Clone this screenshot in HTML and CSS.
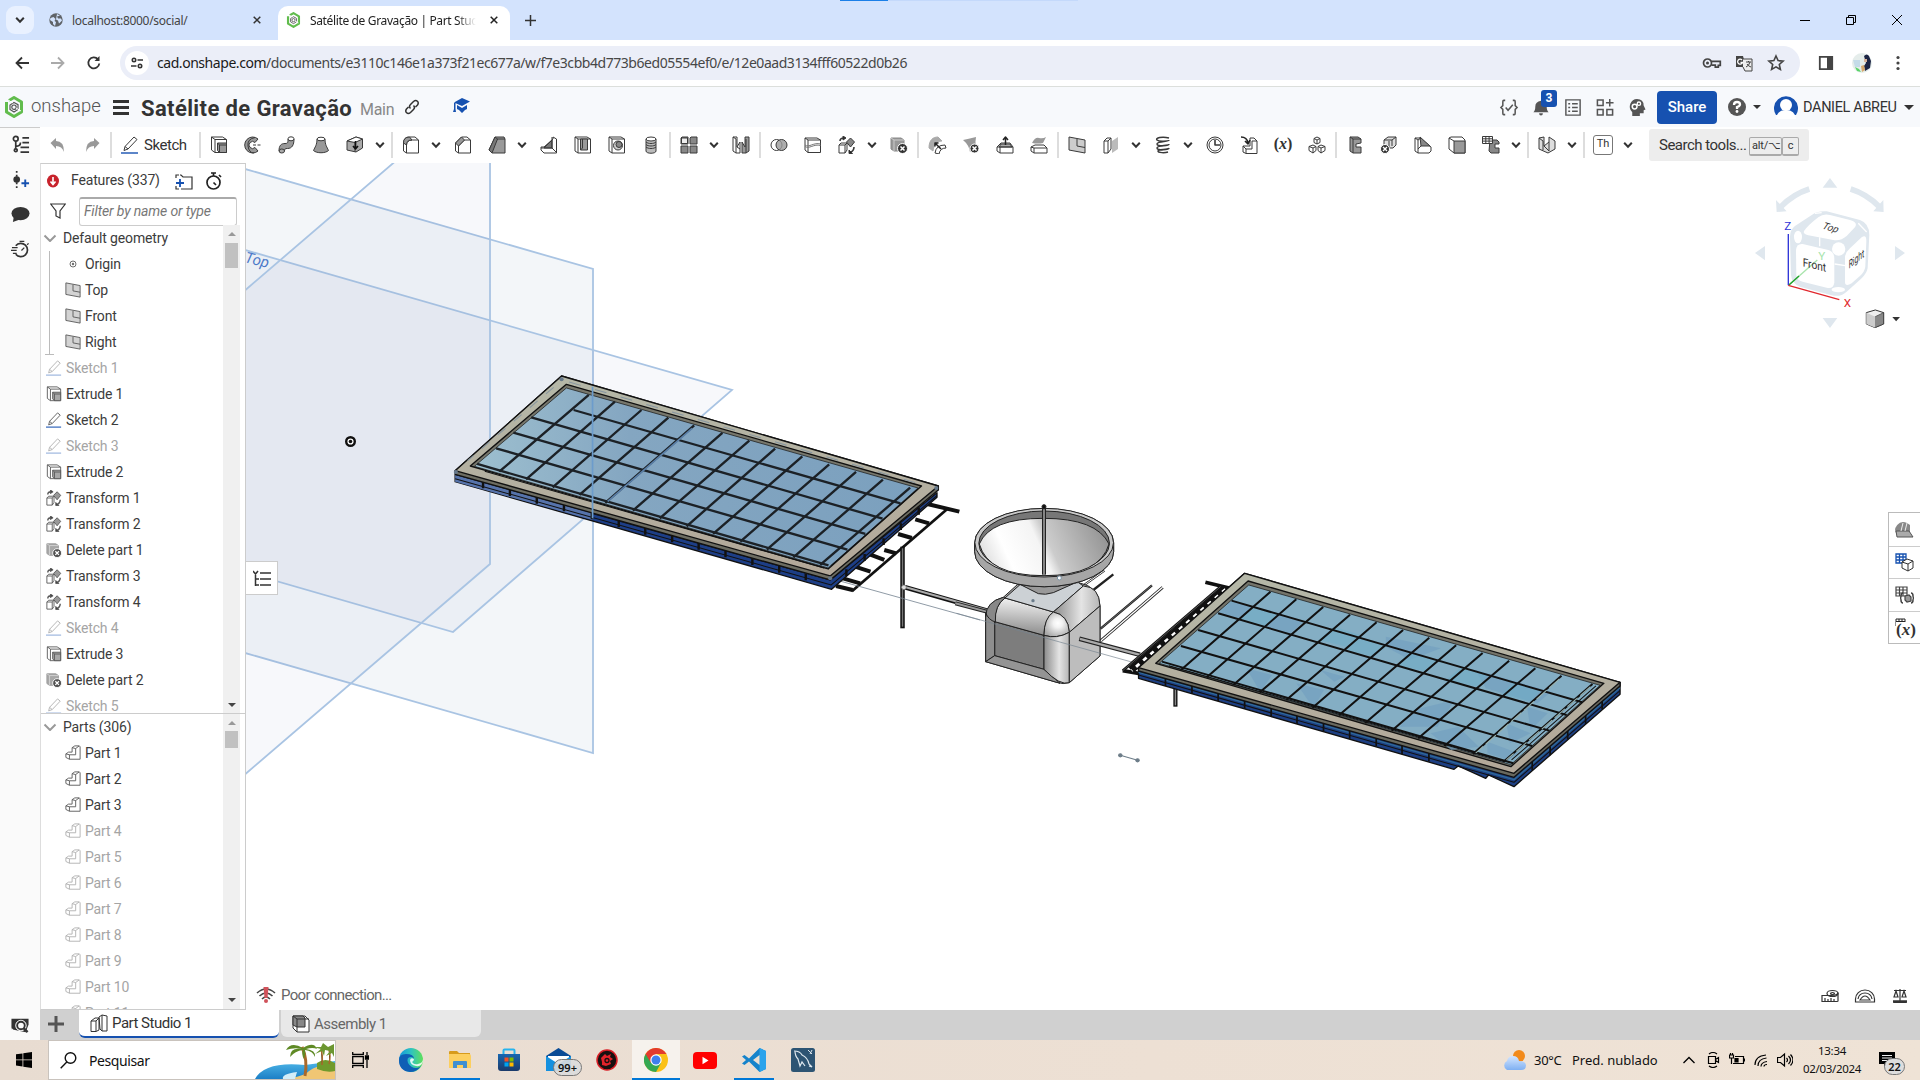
FILE: index.html
```html
<!DOCTYPE html>
<html lang="pt-BR">
<head>
<meta charset="utf-8">
<title>Satélite de Gravação | Part Studio 1</title>
<link rel="stylesheet" href="styles.css">
</head>
<body>
<svg class="defs" width="0" height="0">
<defs>
<linearGradient id="dishIn" x1="0" x2="1" y1=".6" y2=".4"><stop offset="0" stop-color="#ddd"/><stop offset=".2" stop-color="#fff"/><stop offset=".47" stop-color="#f4f4f4"/><stop offset=".55" stop-color="#ccc"/><stop offset="1" stop-color="#949494"/></linearGradient>
<linearGradient id="roundTop" x1=".1" x2="0" y1="0" y2="1"><stop offset="0" stop-color="#f0f0f0"/><stop offset="1" stop-color="#858585"/></linearGradient>
<linearGradient id="roundEdge" x1="0" x2="1"><stop offset="0" stop-color="#8a8a8a"/><stop offset=".6" stop-color="#e4e4e4"/><stop offset="1" stop-color="#b5b5b5"/></linearGradient>
<radialGradient id="corner" cx=".55" cy=".45" r=".6"><stop offset="0" stop-color="#fff"/><stop offset=".3" stop-color="#f2f2f2"/><stop offset="1" stop-color="#a8a8a8"/></radialGradient>
<linearGradient id="frame" x1="0" x2="0" y1="0" y2="1"><stop offset="0" stop-color="#b5b8a8"/><stop offset="1" stop-color="#b3a899"/></linearGradient>
<linearGradient id="glassA" x1="0" x2="1"><stop offset="0" stop-color="#9dbfcf"/><stop offset=".35" stop-color="#84a6c1"/><stop offset="1" stop-color="#7ba0be"/></linearGradient>
<linearGradient id="edgeG" x1="0" x2="1"><stop offset="0" stop-color="#1498dd"/><stop offset=".5" stop-color="#2fc3c0"/><stop offset="1" stop-color="#5fe05a"/></linearGradient>
<linearGradient id="sea" x1="0" x2="0" y1="0" y2="1"><stop offset="0" stop-color="#4fb7e8"/><stop offset="1" stop-color="#1c7fc6"/></linearGradient>
<linearGradient id="cloud" x1="0" x2="0" y1="0" y2="1"><stop offset="0" stop-color="#d4e6ff"/><stop offset="1" stop-color="#7fb0f2"/></linearGradient>
<linearGradient id="store" x1="0" x2="0" y1="0" y2="1"><stop offset="0" stop-color="#1766b0"/><stop offset="1" stop-color="#1b3a6a"/></linearGradient>
<symbol id="chev" viewBox="0 0 10 10"><path d="M1.200 2.800L5 6.800l3.800-4" stroke="#333" stroke-width="2" fill="none"/></symbol>
<symbol id="chev2" viewBox="0 0 14 14"><path d="M1.500 4.500L7 10l5.500-5.500" fill="none" stroke="#888" stroke-width="2"/></symbol>
<symbol id="onlogo" viewBox="0 0 20 22"><path d="M5 4.500l5-3 7.500 4.500v10L10 20.500 2.500 16V6" fill="none" stroke="#61bc4d" stroke-width="3" stroke-linejoin="round"/><path d="M10 6.500l4 2.200v4.800L10 16l-4-2.500V9z" fill="none" stroke="#555" stroke-width="1.200"/><circle cx="10" cy="11.200" r="2.200" fill="none" stroke="#555" stroke-width="1.200"/><path d="M5 4.500L9 7M17 15l-5-3" stroke="#fff" stroke-width="1"/></symbol>
<symbol id="extrude" viewBox="0 0 18 18"><path d="M1.500 1h11l4 2.500v13H5L1.500 14z" fill="#fff"/><path d="M1.500 1L5 3.500h11.500M5 3.500v13"/><path d="M7.500 7h9v9.500h-7l-2-2z" fill="#999"/><path d="M7.500 7l2 2h7M9.500 9v7.500"/></symbol>
<symbol id="revolve" viewBox="0 0 18 18"><path d="M14 3A8 8 0 1 0 14 15l-3-3.500a3.500 3.500 0 1 1 0-5z" fill="#999"/><path d="M11 1.500Q3 3 4 10t6 7"/><path d="M9 9h8" stroke-dasharray="3 1.500"/></symbol>
<symbol id="sweep" viewBox="0 0 18 18"><path d="M1 15c0-5.500 2-7.500 6-7.500 3 0 3-1 3-4.500h6c0 6-2 9.500-6.500 9.500-2.500 0-3 .500-3 2.500z" fill="#999"/><ellipse cx="13" cy="2.800" rx="3" ry="2" fill="#fff"/><ellipse cx="3.800" cy="15" rx="2.700" ry="2" fill="#aaa"/></symbol>
<symbol id="loft" viewBox="0 0 18 18"><path d="M5 3C5 9 3 11 1.500 14.500c3 3 12 3 15 0C15 11 13 9 13 3z" fill="#999"/><ellipse cx="9" cy="3" rx="4" ry="1.800" fill="#fff"/></symbol>
<symbol id="thicken" viewBox="0 0 18 18"><path d="M1 5l9-4 6.500 2v9L10 16l-9-2z" fill="#aaa"/><path d="M1 5l9-4 6.500 2L9 6.500z" fill="#fff"/><path d="M9 6.500V16"/><path d="M9.500 5v7M7 10l2.500 3 2.500-3" stroke="#111" stroke-width="1.600"/></symbol>
<symbol id="fillet" viewBox="0 0 18 18"><path d="M1.500 15V7q0-6 6-6H13l3.500 3v13h-12z" fill="#fff"/><path d="M4.500 17V9q0-5 6-5h6"/><path d="M1.500 7q0-6 6-6L10 4q-5.500 0-5.500 5z" fill="#999"/></symbol>
<symbol id="chamfer" viewBox="0 0 18 18"><path d="M1.500 15V7l6-6H13l3.500 3v13h-12z" fill="#fff"/><path d="M4.500 17v-7l6-6h6"/><path d="M1.500 7l6-6 3 3-6 6z" fill="#999"/></symbol>
<symbol id="draft" viewBox="0 0 18 18"><path d="M1 14L7 1h9l1 2v14H4z" fill="#999"/><path d="M1 14L7 1l2.500 2L4 17z" fill="#777"/><path d="M9 3h8"/></symbol>
<symbol id="rib" viewBox="0 0 18 18"><path d="M13 1l3.500 2v14H4l-3-3v-3h3L13 3z" fill="#fff"/><path d="M4 12L12 4v8z" fill="#777"/><path d="M12 1v11H1M12 12l4.500 4.500"/></symbol>
<symbol id="shell" viewBox="0 0 18 18"><path d="M1 1h12l3.500 2v14H4L1 15z" fill="#fff"/><path d="M4 17V3h12.500M1 1l3 2"/><path d="M6.500 3h7v11h-7z" fill="#999"/><path d="M6.500 14l2-2V3"/></symbol>
<symbol id="hole" viewBox="0 0 18 18"><path d="M1 1h12l3.500 2v14H4L1 15z" fill="#fff"/><path d="M4 17V3h12.500M1 1l3 2"/><circle cx="10" cy="9.500" r="4.500" fill="#ccc"/><circle cx="11" cy="8.500" r="3" fill="#888"/></symbol>
<symbol id="thread" viewBox="0 0 18 18"><path d="M4 3v12c0 3 10 3 10 0V3" fill="#bbb"/><ellipse cx="9" cy="3" rx="5" ry="2" fill="#fff"/><path d="M4 6c2 2 8 2 10 0M4 8.500c2 2 8 2 10 0M4 11c2 2 8 2 10 0"/></symbol>
<symbol id="pattern" viewBox="0 0 18 18"><path d="M1 2l1-1h6v7H1zM10 2l1-1h6v7h-7zM1 10h7v7H1zM10 10h7v7h-7z" fill="#888"/><path d="M1.500 2h6v5.500h-6z" fill="#eee"/></symbol>
<symbol id="mirror" viewBox="0 0 18 18"><path d="M1 1h4v10l3-5v11H4l-3-2z" fill="#fff"/><path d="M1 1l3 2v14M5 11l3 2"/><path d="M17 1h-4v10l-3-5v11h4l3-2z" fill="#999"/><path d="M14 3v14"/></symbol>
<symbol id="boolean" viewBox="0 0 18 18"><circle cx="6.500" cy="9" r="5.500"/><circle cx="11.500" cy="9" r="5.500" fill="#999" fill-opacity=".8"/></symbol>
<symbol id="split" viewBox="0 0 18 18"><path d="M1 2h12l3.500 2v12.500H4L1 14z" fill="#fff"/><path d="M1 2l3 2h12.500M4 4v12.500"/><path d="M1 9c4 3 9-3 15.500-1M1 10.500c4 3 9-3 15.500-1" stroke="#777"/></symbol>
<symbol id="transform" viewBox="0 0 18 18"><path d="M1 9l2-2h6v7l-2 3H1z" fill="#fff"/><path d="M1 9h6v8M7 9l2-2"/><path d="M12.500 2l4 4-4 5-4-5z" fill="#888"/><path d="M2 5q0-3 4-3M16 11q0 4-4 5.500" stroke-width="1.600"/><path d="M5 0l3 2-3 2zM11 14v3.500h3.500z" fill="#222"/></symbol>
<symbol id="delpart" viewBox="0 0 18 18"><path d="M1 2h10l3 2v11H4l-3-2z" fill="#999" stroke="#888"/><path d="M1 2l3 2v11M4 4h10" stroke="#ccc"/><circle cx="12.500" cy="12.500" r="5" fill="#333" stroke="#fff"/><path d="M10.500 10.500l4 4m0-4l-4 4" stroke="#fff" stroke-width="1.500"/></symbol>
<symbol id="modfillet" viewBox="0 0 18 18"><path d="M1 12C1 4 5 1 10 1l4 4C8 5 6 9 5 15z" fill="#aaa" stroke="#aaa"/><path d="M7 17q1-8 10-8l1 3q-6 0-7 6z" fill="#fff"/><path d="M13 13L7 7m0 3.500V7h3.500" stroke="#222" stroke-width="1.500"/></symbol>
<symbol id="delface" viewBox="0 0 18 18"><path d="M1 4q5-1 13-3-1 5 0 8l-6 7Q7 9 1 4z" fill="#999" stroke="none"/><circle cx="12.500" cy="12.500" r="4.500" fill="#333" stroke="#fff"/><path d="M10.500 10.500l4 4m0-4l-4 4" stroke="#fff" stroke-width="1.500"/></symbol>
<symbol id="moveface" viewBox="0 0 18 18"><path d="M1 11l4-4h9l3 4v6H4l-3-2z" fill="#fff"/><path d="M5 8h9l2 3H3z" fill="#aaa"/><path d="M1 11h3v6m0-6h13"/><path d="M9.500 9V1M7 4l2.500-3L12 4" stroke="#222" stroke-width="1.500"/></symbol>
<symbol id="replace" viewBox="0 0 18 18"><path d="M1 11l4-2h9l3 3v5H4l-3-2z" fill="#fff"/><path d="M1 11l3 1h13M4 12v5"/><path d="M2 7q3-6 7-5t7-1l-3 6q-5 1-11 0z" fill="#999" stroke="none"/></symbol>
<symbol id="plane" viewBox="0 0 18 18"><path d="M1 1l16 3v13L1 14z" fill="#ccc"/><path d="M9 3v7l8 1.500"/></symbol>
<symbol id="offset" viewBox="0 0 18 18"><path d="M10 5l6-4v12l-6 4z" fill="#bbb" stroke="none"/><path d="M2 5l3-3h4v11l-3 4H2z" fill="#fff"/><path d="M6 5v12M6 5l3-3M2 5h4"/></symbol>
<symbol id="helix" viewBox="0 0 18 18"><path d="M15 2C8 0 1 2 3 4s12 1 12 0M15 4c0 2-12 1-12 4s12 2 12 0M15 8c0 2-12 1-12 4s12 2 12 0M15 12c-1 2-11 1-11 3s7 2 10 1" stroke-width="1.500"/></symbol>
<symbol id="measure" viewBox="0 0 18 18"><circle cx="9" cy="9" r="8"/><circle cx="9" cy="9" r="6"/><path d="M9 4v5h5" stroke-width="1.600"/></symbol>
<symbol id="derive" viewBox="0 0 18 18"><path d="M3 10v6l3 1.500h11V5l-3-3h-4v8z" fill="#fff"/><path d="M3 10l3 3v4M6 13h6V5h5"/><path d="M1 1q6 0 7 6M5 5l3 3 2-4" stroke="#222" stroke-width="1.600"/></symbol>
<symbol id="cubes" viewBox="0 0 18 18"><path d="M9 1l3 1.500v4L9 8 6 6.500v-4zM6 2.500L9 4l3-1.500M9 4v4M5 9l3 1.500v4L5 17l-4-2.500v-4zM1 10.500l4 1.500 3-1.500M5 12v5M13 9l4 1.500v4L13 17l-3-2.500v-4zM10 10.500l3 1.500 4-1.500M13 12v5"/></symbol>
<symbol id="sheet" viewBox="0 0 18 18"><path d="M4 1h8l3 2v4l-5 1v3h5v6H7l-3-2z" fill="#999"/><path d="M4 1l3 2v14M7 3h8"/></symbol>
<symbol id="delbend" viewBox="0 0 18 18"><path d="M4 4l4-3h8v8l-3 3H9l-5-3z" fill="#ddd"/><path d="M4 4h8v6M12 4l4-3M9 5v7"/><circle cx="5" cy="13" r="4.500" fill="#333" stroke="#fff"/><path d="M3 11l4 4m0-4l-4 4" stroke="#fff" stroke-width="1.400"/></symbol>
<symbol id="flange" viewBox="0 0 18 18"><path d="M1 2h5l11 9v4l-2 2H4l-3-2z" fill="#fff"/><path d="M6 1l10 9H7z" fill="#888"/><path d="M4 17V4L1 2M4 4l3-2M7 10l-3 3"/></symbol>
<symbol id="finish" viewBox="0 0 18 18"><path d="M1 2l2-1h11l3 3v13H6l-5-4z" fill="#fff"/><path d="M6 5h11v12H6z" fill="#999"/><path d="M1 2l5 3"/></symbol>
<symbol id="table" viewBox="0 0 18 18"><path d="M8 4h7l2 2v2h-4v4h4v5H9l-2-2z" fill="#888"/><path d="M.5.500h10v7H.5z" fill="#fff"/><path d="M.5 2.800h10M.5 5.100h10M3.800.5v7M7.100.5v7"/></symbol>
<symbol id="surf" viewBox="0 0 18 18"><path d="M1 2l5-1v9l5-4V1l6 4v8l-7 4-9-4z" fill="#ddd"/><path d="M6 10l5 5V6M1 2l4 3v9"/></symbol>
<symbol id="sketch" viewBox="0 0 18 18"><path d="M3 14.500l1-4L13 1l3 2.500-9 9.500zM4 10.500l3 2.500"/><path d="M0 17h17" stroke="#1651b0" stroke-width="1.400"/></symbol>
<symbol id="part" viewBox="0 0 18 18"><path d="M1 10l3-2h4V3l3-2h5l1 1v14H5l-4-2z" fill="#fff"/><path d="M1 10l4 1h7V4L8 3M12 4l4-3M5 11v5"/></symbol>
</defs>
</svg>

<header class="tabstrip">
  <div class="tabsearch"><svg width="10" height="10"><use href="#chev"/></svg></div>
  <div class="btab"><svg width="14" height="14" viewBox="0 0 14 14"><circle cx="7" cy="7" r="6.700" fill="#5f6368"/><path d="M1.500 5l3-1 2 2-1 2 1.500 1-1 4-2-2V9l-3-2zM8 1l3 1.500-3 1 1 2h3l1 2-3 3-1-3-2-1z" fill="#d3e3fd"/></svg><span class="bt u1">localhost:8000/social/</span><svg class="x" width="8" height="8" viewBox="0 0 8 8"><path d="M.7.700l6.600 6.600m0-6.600L.7 7.300" stroke="#333" stroke-width="1.500"/></svg></div>
  <div class="btab on"><svg width="15" height="16"><use href="#onlogo"/></svg><span class="bt u2">Satélite de Gravação | Part Studio 1</span><svg class="x" width="8" height="8" viewBox="0 0 8 8"><path d="M.7.700l6.600 6.600m0-6.600L.7 7.300" stroke="#222" stroke-width="1.500"/></svg></div>
  <svg class="newtab" width="11" height="11" viewBox="0 0 11 11"><path d="M5.500 0v11M0 5.500h11" stroke="#333" stroke-width="1.500"/></svg>
  <div class="loadbar"><i></i></div>
  <div class="wc"><svg viewBox="0 0 10 10"><path d="M0 5.500h10" stroke="#000"/></svg><svg viewBox="0 0 10 10"><path d="M.5 2.500h7v7h-7zM2.500 2.500v-2h7v7h-2" fill="none" stroke="#000"/></svg><svg viewBox="0 0 10 10"><path d="M0 0l10 10M10 0L0 10" stroke="#000"/></svg></div>
</header>

<nav class="addr">
  <svg class="nb" viewBox="0 0 16 16"><path d="M15 8H3M8 2.500L2.500 8 8 13.500" stroke="#333" stroke-width="1.800" fill="none"/></svg>
  <svg class="nb" viewBox="0 0 16 16"><path d="M1 8h12M8 2.500L13.500 8 8 13.500" stroke="#aaa" stroke-width="1.800" fill="none"/></svg>
  <svg class="nb" viewBox="0 0 16 16"><path d="M13.300 8.500A5.500 5.500 0 1 1 12 4.300" stroke="#333" stroke-width="1.800" fill="none"/><path d="M13.500 1v5H8.500z" fill="#333"/></svg>
  <div class="omni"><b class="site"><svg width="12" height="12" viewBox="0 0 12 12" fill="none" stroke="#333" stroke-width="1.600"><circle cx="3" cy="3" r="1.700"/><path d="M6.500 3H12M0 9h5.500"/><circle cx="9" cy="9" r="1.700"/></svg></b><span class="url"><em>cad.onshape.com</em>/documents/e3110c146e1a373f21ec677a/w/f7e3cbb4d773b6ed05554ef0/e/12e0aad3134fff60522d0b26</span>
    <svg class="oi" viewBox="0 0 18 18"><g fill="none" stroke="#444" stroke-width="1.700"><circle cx="4.500" cy="9" r="4"/><path d="M8.300 7.300h9v4h-2v1.800h-3v-2H8.300"/></g><circle cx="4.500" cy="9" r="1.500" fill="#444"/></svg>
    <svg class="oi" viewBox="0 0 18 18"><path d="M1 2h7l3 11H1z" fill="#444"/><path d="M8 5h9v12H10l-2-4" fill="#eee" stroke="#444"/><path d="M7 6a2.500 2.500 0 1 0 .5 2.500H5.500" stroke="#fff" fill="none" stroke-width="1.300"/><path d="M11 8h5M13.500 7v1M15 8q-1 4-4 5M12 10q1 2 4 3" stroke="#444" fill="none"/></svg>
    <svg class="oi" viewBox="0 0 18 18"><path d="M9 2l2.100 4.600 5 .5-3.800 3.400 1.100 5L9 12.900l-4.400 2.600 1.100-5L1.900 7.100l5-.5z" fill="none" stroke="#444" stroke-width="1.600"/></svg>
  </div>
  <svg class="nb r1" viewBox="0 0 16 16"><path d="M1.800 1.800h12.400v12.400H1.800z" fill="none" stroke="#444" stroke-width="1.800"/><path d="M9 2h5v12H9z" fill="#444"/></svg>
  <svg class="nb av" viewBox="0 0 20 20"><circle cx="10" cy="10" r="10" fill="#e5edeb"/><path d="M12 3q3-3 5 0l2 5-1 7-5 3-1-5 2-3z" fill="#1c2444"/><path d="M12 6h3v3h-3z" fill="#d9b39a"/><path d="M3 14l4 2 2 3-4-1z" fill="#59d468"/><path d="M1 7h7v7H3z" fill="#c4dbe8"/><path d="M9 13l3-1 1 5-3 2z" fill="#d7a86c"/></svg>
  <svg class="nb" viewBox="0 0 16 16"><g fill="#444"><circle cx="8" cy="2.500" r="1.600"/><circle cx="8" cy="8" r="1.600"/><circle cx="8" cy="13.500" r="1.600"/></g></svg>
</nav>

<header class="app">
  <svg class="logo" width="20" height="22"><use href="#onlogo"/></svg>
  <span class="brand">onshape</span>
  <span class="burger"><i></i><i></i><i></i></span>
  <h1>Satélite de Gravação</h1><span class="main">Main</span>
  <svg class="link" width="16" height="16" viewBox="0 0 16 16" fill="none" stroke="#333" stroke-width="1.500"><path d="M6.500 9.500c-1.500-1.500-1-3 0-4l3-3c3-2.500 6 .5 4 3.500l-2 2M9.500 6.500c1.500 1.500 1 3 0 4l-3 3c-3 2.500-6-.5-4-3.500l2-2"/></svg>
  <svg class="cap" width="17" height="16" viewBox="0 0 17 16"><path d="M9 0l8 3.500L9 8 1 4.500zM4 7l5 3 5-3v4l-2 1-3 3-3-3-2-1zM1 5h1.500v6L3 14H0l1-3z" fill="#1651b0"/></svg>
  <div class="hr">
    <svg class="hi" viewBox="0 0 20 20" fill="none" stroke="#555" stroke-width="1.600"><path d="M6 2.500H4.500Q3.500 2.500 3.500 4v4L1.500 10l2 2v4q0 1.500 1 1.500H6M14 2.500h1.500q1 0 1 1.500v4l2 2-2 2v4q0 1.500-1 1.500H14M6.500 10l2.500 3 5-6"/></svg>
    <span class="bell"><svg class="hi" viewBox="0 0 20 20"><path d="M2 15q2-1.500 2-6 0-5 6-6 6 1 6 6 0 4.500 2 6zM8 16h4q0 2.500-2 2.500T8 16z" fill="#555"/></svg><b>3</b></span>
    <svg class="hi" viewBox="0 0 20 20" fill="none" stroke="#555" stroke-width="1.500"><path d="M2.500 2h15v16h-15zM5 6h2m2 0h6M5 10h2m2 0h6M5 14h2m2 0h6"/></svg>
    <svg class="hi" viewBox="0 0 20 20" fill="none" stroke="#555" stroke-width="1.600"><path d="M2 2h6v6H2zM2 12h6v6H2zM12 12h6v6h-6zM15 1v8M11 5h8"/></svg>
    <svg class="hi" viewBox="0 0 20 20"><path d="M5 19v-4Q1 11 3 6q2-5 7-5 7 0 7 7l2 4-2 1v3h-4v3z" fill="#555"/><circle cx="7.500" cy="9" r="2.500" fill="none" stroke="#fff" stroke-width="1.600"/><circle cx="12" cy="6" r="1.800" fill="none" stroke="#fff" stroke-width="1.400"/></svg>
    <button>Share</button>
    <svg class="help" width="18" height="18" viewBox="0 0 18 18"><circle cx="9" cy="9" r="9" fill="#555"/><path d="M6 7q0-3 3-3t3 2.500Q12 8 9 9v2" stroke="#fff" stroke-width="2.300" fill="none"/><circle cx="9" cy="13.500" r="1.400" fill="#fff"/></svg>
    <i class="caret c1"></i>
    <svg class="user" width="24" height="24" viewBox="0 0 24 24"><path d="M2 20A12 12 0 1 1 22 20z" fill="#1651b0"/><circle cx="12" cy="10" r="6" fill="#fff"/><path d="M2 24q1-9 10-9t10 9z" fill="#fff"/></svg>
    <span class="name">DANIEL ABREU</span><i class="caret"></i>
  </div>
</header>

<main>
  <aside class="rail">
    <svg viewBox="0 0 20 20" fill="none" stroke="#333" stroke-width="1.800"><circle cx="5" cy="4" r="2.500"/><circle cx="5" cy="16" r="1.500"/><path d="M5 6.500v8M5 12q5 0 5-4M12 3h7M12 8h7M10 13h9M10 18h9"/></svg>
    <svg viewBox="0 0 20 20"><path d="M6 1v18" stroke="#333" stroke-width="1.800" stroke-dasharray="2 2"/><circle cx="6" cy="10" r="3.500" fill="#333"/><path d="M11 14h8M15 10v8" stroke="#1651b0" stroke-width="2"/></svg>
    <svg viewBox="0 0 20 20"><ellipse cx="10" cy="9" rx="9.500" ry="7" fill="#333"/><path d="M3 12l-1 6 8-3z" fill="#333"/></svg>
    <svg viewBox="0 0 20 20" fill="none" stroke="#333" stroke-width="1.800"><path d="M5 6a7 7 0 1 1 0 9"/><path d="M9 1.500h5M17 5l1.500-1.500M11 11l3-3M1 8h6M0 11h6M2 14h4" stroke-width="1.300"/></svg>
    <svg class="last" viewBox="0 0 20 20"><path d="M1 3h18v6l-3 8-15-3z" fill="#333"/><circle cx="11" cy="10" r="5.500" fill="#fafafa" stroke="#fafafa"/><circle cx="11" cy="10" r="4" fill="none" stroke="#333" stroke-width="2"/><path d="M14 13l4 4" stroke="#333" stroke-width="2.500"/><path d="M1 12l4 6H1z" fill="#fafafa"/></svg>
  </aside>
  <div class="studio">
    <div class="tools">
      <svg class="un" viewBox="0 0 14 14"><path d="M0 5l5.500-5v3q8 0 8 11-2-6-8-6v3z" fill="#999"/></svg>
      <svg class="un" viewBox="0 0 14 14"><path d="M14 5L8.500 0v3q-8 0-8 11 2-6 8-6v3z" fill="#999"/></svg>
      <i class="sep"></i><span class="sk"><svg width="18" height="18"><use href="#sketch"/></svg>Sketch</span><i class="sep"></i>
      <svg class="t"><use href="#extrude"/></svg><svg class="t"><use href="#revolve"/></svg><svg class="t"><use href="#sweep"/></svg><svg class="t"><use href="#loft"/></svg><svg class="t"><use href="#thicken"/></svg><svg class="c"><use href="#chev"/></svg><i class="sep"></i>
      <svg class="t"><use href="#fillet"/></svg><svg class="c"><use href="#chev"/></svg><svg class="t"><use href="#chamfer"/></svg><svg class="t"><use href="#draft"/></svg><svg class="c"><use href="#chev"/></svg><svg class="t"><use href="#rib"/></svg><svg class="t"><use href="#shell"/></svg><svg class="t"><use href="#hole"/></svg><svg class="t"><use href="#thread"/></svg><i class="sep"></i>
      <svg class="t"><use href="#pattern"/></svg><svg class="c"><use href="#chev"/></svg><svg class="t"><use href="#mirror"/></svg><i class="sep"></i>
      <svg class="t"><use href="#boolean"/></svg><svg class="t"><use href="#split"/></svg><svg class="t"><use href="#transform"/></svg><svg class="c"><use href="#chev"/></svg><svg class="t"><use href="#delpart"/></svg><i class="sep"></i>
      <svg class="t"><use href="#modfillet"/></svg><svg class="t"><use href="#delface"/></svg><svg class="t"><use href="#moveface"/></svg><svg class="t"><use href="#replace"/></svg><i class="sep"></i>
      <svg class="t"><use href="#plane"/></svg><svg class="t"><use href="#offset"/></svg><svg class="c"><use href="#chev"/></svg><svg class="t"><use href="#helix"/></svg><svg class="c"><use href="#chev"/></svg><svg class="t"><use href="#measure"/></svg><svg class="t"><use href="#derive"/></svg><span class="t vx">(<i>x</i>)</span><svg class="t"><use href="#cubes"/></svg><i class="sep"></i>
      <svg class="t"><use href="#sheet"/></svg><svg class="t"><use href="#delbend"/></svg><svg class="t"><use href="#flange"/></svg><svg class="t"><use href="#finish"/></svg><svg class="t"><use href="#table"/></svg><svg class="c"><use href="#chev"/></svg><i class="sep"></i>
      <svg class="t"><use href="#surf"/></svg><svg class="c"><use href="#chev"/></svg><i class="sep"></i>
      <span class="th">Th</span><svg class="c"><use href="#chev"/></svg>
      <div class="stools"><span>Search tools...</span><kbd>alt/⌥</kbd><kbd>c</kbd></div>
    </div>

    <div class="work">
      <section class="features">
        <div class="fh"><svg width="12" height="14" viewBox="0 0 12 14"><ellipse cx="6" cy="7" rx="6" ry="6.500" fill="#c8232c"/><path d="M6 3v7M3.500 7.500L6 10.500l2.500-3" stroke="#fff" stroke-width="1.600" fill="none"/></svg><span>Features (337)</span>
          <svg class="fo" width="18" height="16" viewBox="0 0 18 16" fill="none"><path d="M4 1H1v3M1 12v3h3M6 15h11V3H8L6 1H5" stroke="#333" stroke-width="1.200"/><path d="M1 9h8M5 5v8" stroke="#1651b0" stroke-width="1.800"/></svg>
          <svg width="17" height="18" viewBox="0 0 17 18" fill="none" stroke="#222" stroke-width="1.700"><circle cx="8.500" cy="10.500" r="6.500"/><path d="M6 1h5M8.500 1v3M8.500 10.500l2.500 2.500M14 3l2 2"/></svg></div>
        <div class="ff"><svg width="16" height="16" viewBox="0 0 16 16"><path d="M.7 1h14.600L10 8v7l-4-2V8z" fill="none" stroke="#333" stroke-width="1.200"/></svg><div class="inp">Filter by name or type</div></div>
        <div class="list l1">
          <div class="rows">
            <div class="row g"><svg><use href="#chev2"/></svg>Default geometry</div>
            <div class="geo">
            <div class="row k"><svg viewBox="0 0 16 16"><circle cx="8" cy="8" r="3" fill="none" stroke="#555"/><circle cx="8" cy="8" r="1.200" fill="#555" stroke="none"/></svg>Origin</div>
            <div class="row k"><svg><use href="#plane"/></svg>Top</div>
            <div class="row k"><svg><use href="#plane"/></svg>Front</div>
            <div class="row k"><svg><use href="#plane"/></svg>Right</div>
            </div>
            <div class="row off"><svg><use href="#sketch"/></svg>Sketch 1</div>
            <div class="row"><svg><use href="#extrude"/></svg>Extrude 1</div>
            <div class="row"><svg><use href="#sketch"/></svg>Sketch 2</div>
            <div class="row off"><svg><use href="#sketch"/></svg>Sketch 3</div>
            <div class="row"><svg><use href="#extrude"/></svg>Extrude 2</div>
            <div class="row"><svg><use href="#transform"/></svg>Transform 1</div>
            <div class="row"><svg><use href="#transform"/></svg>Transform 2</div>
            <div class="row"><svg><use href="#delpart"/></svg>Delete part 1</div>
            <div class="row"><svg><use href="#transform"/></svg>Transform 3</div>
            <div class="row"><svg><use href="#transform"/></svg>Transform 4</div>
            <div class="row off"><svg><use href="#sketch"/></svg>Sketch 4</div>
            <div class="row"><svg><use href="#extrude"/></svg>Extrude 3</div>
            <div class="row"><svg><use href="#delpart"/></svg>Delete part 2</div>
            <div class="row off"><svg><use href="#sketch"/></svg>Sketch 5</div>
          </div>
          <div class="sb"><i class="up"></i><i class="thumb"></i><i class="dn"></i></div>
        </div>
        <div class="list l2">
          <div class="rows">
            <div class="row g"><svg><use href="#chev2"/></svg>Parts (306)</div>
            <div class="row k"><svg><use href="#part"/></svg>Part 1</div>
            <div class="row k"><svg><use href="#part"/></svg>Part 2</div>
            <div class="row k"><svg><use href="#part"/></svg>Part 3</div>
            <div class="row k off"><svg><use href="#part"/></svg>Part 4</div>
            <div class="row k off"><svg><use href="#part"/></svg>Part 5</div>
            <div class="row k off"><svg><use href="#part"/></svg>Part 6</div>
            <div class="row k off"><svg><use href="#part"/></svg>Part 7</div>
            <div class="row k off"><svg><use href="#part"/></svg>Part 8</div>
            <div class="row k off"><svg><use href="#part"/></svg>Part 9</div>
            <div class="row k off"><svg><use href="#part"/></svg>Part 10</div>
            <div class="row k off"><svg><use href="#part"/></svg>Part 11</div>
          </div>
          <div class="sb"><i class="up"></i><i class="thumb"></i><i class="dn"></i></div>
        </div>
      </section>

      <section class="canvas">
        <svg class="scene" width="1674" height="847" viewBox="246 163 1674 847">
          <!-- reference planes -->
          <g fill="#5a7fac" fill-opacity=".07" stroke="#a9c4e3" stroke-width="1.800">
            <path d="M200 156L593 269V753L200 640z"/>
            <path d="M200 237L732 390 453 632 200 559z" fill-opacity=".05"/>
            <path d="M200 329L490 80V564L200 813z" fill-opacity=".05"/>
          </g>
          <text x="244" y="262" transform="rotate(14 244 262)" class="pl">Top</text>
          <circle cx="350.500" cy="441.500" r="4.300" fill="#fff" stroke="#111" stroke-width="2.400"/><circle cx="350.500" cy="441.500" r="1.800" fill="#111"/>

          <!-- left solar wing -->
          <g transform="translate(440 360) scale(.3444 .3333)" stroke="#111" stroke-width="4" stroke-linejoin="round">
            <path d="M1415 432L1508 455M1380 478l40 12M1330 522l40 12M1290 570l35 10M1240 580l50 20M1205 620l45 15M1170 655l50 15M1150 678l48 12" stroke-width="12"/>
            <path d="M1472 448L1196 694" stroke-width="8"/>
            <path d="M1343 560V805" stroke-width="13"/><path d="M1343 565V800" stroke="#777" stroke-width="4"/>
            <path d="M1133 655L1568 780" stroke="#7b8896" stroke-width="2.500"/>
            <path d="M1350 682L1630 764" stroke-width="14"/><path d="M1350 681L1630 763" stroke="#aaa" stroke-width="6"/><circle cx="1347" cy="682" r="7" fill="#ddd" stroke="#666" stroke-width="2"/>
            <path d="M44 345L1133 660 1443 398V412L1137 688 44 365z" fill="#1d3e86"/>
            <path d="M44 345L443 460V480L44 365z" fill="#5673ab" stroke="none"/>
            <path d="M44 356L1136 675 1443 407" stroke-width="3" fill="none"/>
            <path d="M125 365v20M203 388v20M281 411v20M360 434v20M441 458v20M519 481v20M596 504v20M674 527v20M751 549v20M829 572v20M907 595v20M985 618v20M1062 641v20M1180 628v20M1233 582v20M1288 535v20M1338 490v20M1390 444v20" stroke-width="7"/>
            <path d="M44 332L353 48 1447 378V390L1133 660 44 343z" fill="#6d6d62"/>
            <path d="M44 332L353 48 1447 378 1133 648z" fill="url(#frame)"/>
            <path d="M88 318L367 73 1398 378 1127 627z" fill="#77776c"/>
            <path d="M100 319L367 84 1388 384 1127 624z" fill="url(#glassA)" stroke-width="2"/>
            <path d="M432 105L172 335M508 125L250 358M585 150L327 382M663 173L405 405M738 196L480 429M820 219L560 452M898 242L638 475M973 266L716 499M1052 289L793 522M1130 313L872 545M1208 336L949 569M1286 359L1026 592M1365 383L1104 615" stroke="#1c2126" stroke-width="7"/>
            <path d="M388 150L1337 430M265 172L1285 476M213 218L1235 522M163 265L1183 569M108 312L1128 616" stroke="#1c2126" stroke-width="7"/>
            <path d="M130 334L1115 624M1385 390L1135 618" stroke-width="3"/>
            <path d="M732 205L487 424" stroke="#5b80a8" stroke-width="5"/>
            <path d="M375 66L1400 374" stroke="#8796a0" stroke-width="3" stroke-dasharray="35 43"/>
            <path d="M330 82L80 302" stroke="#8796a0" stroke-width="3" stroke-dasharray="30 32"/>
            <path d="M443 80V475" stroke="#6c9ccc" stroke-width="5"/>
            <circle cx="353" cy="58" r="6" fill="#66788a" stroke="none"/><circle cx="1441" cy="384" r="6" fill="#66788a" stroke="none"/><circle cx="1133" cy="655" r="6" fill="#66788a" stroke="none"/><circle cx="46" cy="336" r="6" fill="#66788a" stroke="none"/>
          </g>

          <!-- dish and body -->
          <g transform="translate(960 480) scale(.3333)" stroke="#222" stroke-width="3" stroke-linejoin="round">
            <path d="M370 317L433 272" stroke-width="7"/><path d="M370 317L433 272" stroke="#fff" stroke-width="3"/><path d="M400 330L460 283M422 446L576 316" stroke-width="7"/><path d="M422 446L576 316" stroke="#888" stroke-width="2"/><path d="M422 483L608 322" stroke-width="9"/><path d="M422 483L608 322" stroke="#fff" stroke-width="4"/>
            <path d="M-14 370L80 395" stroke-width="12"/><path d="M-14 370L80 395" stroke="#999" stroke-width="6"/>
            <path d="M77 415Q78 365 130 352L172 314 356 308Q418 320 420 378V528L328 608Q310 614 290 607L77 545z" fill="#a9a9a9"/>
            <path d="M104 425L252 466V568L104 527z" fill="#7d7d7d"/><path d="M77 400L104 424V527L77 545z" fill="#8e8e8e"/><path d="M77 545L104 527 252 568 300 610z" fill="#949494"/>
            <path d="M135 354L280 396Q252 420 252 466L104 425Q104 375 135 354z" fill="url(#roundTop)"/>
            <path d="M77 410Q78 365 130 352L135 354Q104 375 106 426 85 420 77 398z" fill="#888"/>
            <path d="M135 354L180 314 356 308 370 318 280 396z" fill="#ccd1d5"/>
            <path d="M280 396L370 318Q418 320 420 378L328 457Q325 405 280 396z" fill="url(#roundEdge)"/>
            <path d="M252 466Q252 415 280 396 325 405 328 457 290 478 252 466z" fill="url(#corner)"/>
            <path d="M252 466Q290 478 328 457V608Q300 618 252 568z" fill="url(#roundEdge)"/>
            <path d="M328 457L420 378V528L328 608z" fill="#bdbdbd"/>
            <path d="M170 308L235 341Q255 346 280 338L365 300z" fill="#999"/>
            <path d="M44 188A208 102 0 0 1 461 188V215A208 105 0 0 1 44 215z" fill="#929292"/>
            <path d="M461 188V215A208 105 0 0 1 44 215V188z" fill="#a6a6a6"/>
            <ellipse cx="252.500" cy="188" rx="208" ry="103" fill="#c9c9c9"/>
            <ellipse cx="252.500" cy="190" rx="196" ry="97" fill="#777"/>
            <path d="M58 192Q90 115 250 115T447 192Q420 287 252 287T58 192z" fill="url(#dishIn)"/>
            <path d="M252 84V284" stroke-width="12"/><path d="M252 88V284" stroke="#999" stroke-width="5"/><circle cx="252" cy="80" r="6" fill="#111"/>
            <circle cx="298" cy="294" r="6" fill="#fff" stroke="#7a94a8"/><circle cx="219" cy="362" r="5" fill="#697b8a" stroke="none"/>
            <path d="M358 476L540 524" stroke-width="14"/><path d="M360 477L540 525" stroke="#aaa" stroke-width="7"/>
            <path d="M-10 400L540 553" stroke="#75838f" stroke-width="2"/>
          </g>

          <!-- right solar wing -->
          <g transform="translate(1100 560) scale(.3444 .3333)" stroke="#111" stroke-width="4" stroke-linejoin="round">
            <path d="M306 67L375 84M66 332L112 340" stroke-width="11"/>
            <path d="M365 85L90 330" stroke-width="22"/><path d="M365 88L92 332" stroke="#fff" stroke-width="9" stroke-dasharray="13 15"/><path d="M350 80L66 332" stroke-width="8"/><path d="M350 80L66 332" stroke="#777" stroke-width="2"/>
            <path d="M219 375V440" stroke-width="12"/><path d="M219 375V436" stroke="#888" stroke-width="4"/>
            <path d="M112 323V355L1028 628 1040 618 1120 655 1128 645 1202 680 1510 403V367z" fill="#1d3f83"/>
            <path d="M112 345L1202 667 1510 392" stroke-width="3" fill="none"/>
            <path d="M112 337L1202 659 1510 383" stroke="#2f6a98" stroke-width="4" fill="none"/>
            <path d="M190 352v26M267 375v26M343 397v26M420 420v26M497 443v26M572 465v26M649 488v26M725 510v26M802 533v26M877 556v26M955 578v26M1255 605v26M1307 560v26M1358 512v26M1410 465v26M1458 422v26" stroke-width="5"/>
            <path d="M112 323L420 40 1510 367V378L1202 652 112 333z" fill="#68685e"/>
            <path d="M112 323L420 40 1510 367 1202 640z" fill="url(#frame)"/>
            <path d="M162 310L430 63 1463 370 1193 620z" fill="#74746a"/>
            <path d="M172 310L432 75 1452 376 1193 614z" fill="#84aec4" stroke-width="2"/>
            <g stroke="none" fill="#739fc0" fill-opacity=".7"><path d="M382 124L440 140 405 178 343 160zM515 165L590 187 550 222 475 200zM425 325L500 345 465 395zM570 370L650 390 620 445zM640 330l70 20-30 15zM830 230L990 265 900 300 830 260zM1090 330l220 65-40 35-150-45zM910 450L1030 420 980 500 870 500zM960 520l80-20 60 60-80 10zM1240 440l60 20-50 50zM1180 490l70 30-60 30zM1125 545l90 35-30 20-60-20z"/></g>
            <g stroke="none" fill="#6fadc7" fill-opacity=".55"><path d="M442 143l80 22-45 35-75-22zM680 200l75 25-40 35-80-20zM750 230l80 30-35 30-85-20zM900 275l80 25-35 35-85-20zM1050 320l75 25-30 35-90-20zM1200 365l80 25-30 35-85-20z"/></g>
            <path d="M495 95L235 330M570 118L310 352M648 141L387 375M726 164L464 397M803 187L541 420M880 210L617 443M956 233L694 466M1034 256L770 489M1111 279L847 512M1188 302L924 535M1264 325L1000 558M1340 347L1083 582M1430 372L1172 605" stroke-width="6"/>
            <path d="M382 122L1400 427M343 160L1355 465M285 210L1305 512M235 258L1255 558M180 305L1200 610" stroke-width="6"/>
            <path d="M1334 357L1090 580M1424 380L1180 600" stroke="#9db8b4" stroke-width="3" stroke-dasharray="40 10"/>
            <path d="M200 317L1175 605M1440 378L1195 600" stroke-width="3"/>
            <g fill="#6c7c88" stroke="#6c7c88" stroke-width="3"><path d="M59 586L109 601"/><circle cx="59" cy="586" r="5"/><circle cx="109" cy="601" r="5"/></g>
          </g>

          <!-- view cube -->
          <g transform="translate(1600 0) scale(.3333)">
            <g fill="#dfe7ee"><path d="M668 563l22-29 22 29zM668 954h44l-22 30zM495 738v43l-30-22zM885 738v43l30-22zM528 600l32 34-30 2zM850 600l-30 34 31 2z"/></g>
            <path d="M628 567Q580 582 543 620M752 567Q800 582 838 620" fill="none" stroke="#dfe7ee" stroke-width="17"/>
            <path d="M570 710Q570 690 585 678L640 642Q655 632 680 634L780 660Q808 670 808 705L803 805Q800 820 785 835L740 875Q722 892 695 886L600 860Q575 850 573 825z" fill="#dfe7ee"/>
            <g fill="#fff"><path d="M612 693Q625 675 655 652 670 640 690 645L750 660Q778 668 762 685L740 708Q722 724 700 720L625 706Q608 702 612 693z"/><path d="M588 750Q590 730 608 732L685 750Q703 755 703 775V848Q700 868 680 863L608 845Q590 840 589 825z"/><path d="M735 770Q738 755 750 745L785 712Q800 702 799 725L796 800Q794 815 780 828L755 850Q735 862 735 845z"/><circle cx="716" cy="747" r="20"/><ellipse cx="594" cy="711" rx="12" ry="19"/><ellipse cx="715" cy="869" rx="20" ry="8"/></g>
            <path d="M659 712v27M704 792l32 5M645 640l20-2M803 820l-10 15M775 670l25 26" stroke="#fff" stroke-width="4"/>
            <path d="M566 856L652 780" stroke="#a8e4ac" stroke-width="4"/><path d="M566 856L597 828" stroke="#1fa02a" stroke-width="4"/>
            <path d="M565 702V856" stroke="#2f35d8" stroke-width="4"/><path d="M565 856L718 899" stroke="#e0282e" stroke-width="4"/>
            <g class="vc"><text x="553" y="691" fill="#2f35d8">Z</text><text x="731" y="921" fill="#e0282e">X</text><text x="655" y="779" fill="#a8e4ac">Y</text>
            <text transform="matrix(.87 .2 0 1 608 799)" fill="#333">Front</text><text transform="matrix(.58 -.46 0 1 746 807)" fill="#333">Right</text><text transform="matrix(.78 .22 -.5 .72 664 685)" fill="#333">Top</text></g>
            <path d="M799 938l27-8 25 8v34l-26 11-26-11z" fill="#eee" stroke="#333" stroke-width="3"/><path d="M826 950l25-12v34l-26 11z" fill="#888" stroke="#333" stroke-width="2"/><path d="M799 938l27 12v33l-27-11z" fill="#ccc"/>
            <path d="M877 951h23l-11.500 13z" fill="#333"/>
          </g>

          <!-- measuring tools -->
          <g fill="none" stroke="#333" stroke-width="1.200"><path d="M1822 1001.500v-6h9q7 0 7-3v8.500q0 .5-1 .5zM1825 1001v-3m3 3v-2m3 2v-3m3 3v-2"/><ellipse cx="1832.500" cy="993.500" rx="5.500" ry="3"/><ellipse cx="1832.500" cy="993.500" rx="2" ry="1"/><path d="M1855.500 1002v-3a9.500 9 0 0 1 19 0v3zM1860 1000q5-8 10 0zM1858 999q1-6 7-6t7 6"/><path d="M1893.500 1002.500h13M1900 989v12M1894 990.500h12M1896 991l-2 6h4zM1904 991l-2 6h4z"/><path d="M1893 1001.500h14" stroke-width="2.500"/></g>
        </svg>
        <div class="toggle"><svg width="18" height="18" viewBox="0 0 18 18" fill="none" stroke="#333" stroke-width="1.500"><path d="M0 2l2.500 3L5 2M2.500 6v11M7 4h11M7 10h11M7 16h11M2.500 10H6M2.500 16H6"/></svg></div>
        <div class="side">
          <div><svg viewBox="0 0 20 20"><path d="M2 16a8 8 0 0 1 10-12l3 2v9z" fill="#888"/><path d="M1 12h13l4 6H2z" fill="#aaa" stroke="#555"/><path d="M6 12l2-8M10 12l2-8" stroke="#eee"/></svg></div>
          <div><svg viewBox="0 0 20 20" fill="#fff" stroke="#333"><path d="M1 2h10v9H1zM1 5h10M1 8h10M4.500 2v9M8 2v9" stroke="#1651b0" stroke-width="1.300"/><path d="M12 7l6 2v7l-5 3-6-3v-6z"/><path d="M7 10l6 2 5-3M13 12v7" fill="none"/></svg></div>
          <div><svg viewBox="0 0 20 20" fill="none" stroke="#444" stroke-width="1.200"><path d="M1 2h11v9H1zM1 5h11M1 8h11M4.500 2v9M8 2v9"/><path d="M8 8q-2 0-2 3 0 2-1 2 1 0 1 2 0 3 2 3M16 8q2 0 2 3 0 2 1 2-1 0-1 2 0 3-2 3" stroke-width="1.500"/><path d="M10 11l4-1 2 2v4l-4 1-2-2z" fill="#999"/></svg></div>
          <div><svg viewBox="0 0 20 20"><path d="M1 2h9v7H1zM1 4.500h9M4 2v7M7 2v7" fill="none" stroke="#222"/></svg><b>(<i>x</i>)</b></div>
        </div>
        <div class="poor"><svg width="20" height="16" viewBox="0 0 20 16"><path d="M1 6q9-8 18 0M3.500 9q6.500-6 13 0M6 12q4-4 8 0" stroke="#444" stroke-width="1.600" fill="none"/><path d="M7.500 0h5l-1 11h-3z" fill="#d0525a"/><circle cx="10" cy="14" r="2" fill="#d0525a"/></svg>Poor connection...</div>
      </section>
    </div>

    <footer class="dtabs"><svg width="16" height="16" viewBox="0 0 16 16"><path d="M8 0v16M0 8h16" stroke="#555" stroke-width="3"/></svg>
      <div class="dt on"><svg width="18" height="18" viewBox="0 0 18 18" fill="#fff" stroke="#333"><path d="M1 7l4-3h4v12l-3 1.500H1zM1 7h5v10M6 7l3-3M9 3l3-2 5 1v15h-5l-2-2zM12 1v16"/></svg>Part Studio 1</div>
      <div class="dt"><svg width="18" height="18" viewBox="0 0 18 18" stroke="#333"><path d="M1 1h12l4 4v12H5l-4-4z" fill="#fff"/><path d="M1 1h10l2 2v9H5l-4-2z" fill="#888"/><path d="M1 1l4 3h12M5 4v13" fill="none"/></svg>Assembly 1</div>
    </footer>
  </div>
</main>

<footer class="taskbar">
  <div class="cell"><svg width="16" height="16" viewBox="0 0 16 16"><path d="M0 2.300L6.500 1.400v6.100H0zM7.300 1.300L16 0v7.500H7.300zM0 8.300h6.500v6.200L0 13.600zM7.300 8.300H16V16l-8.700-1.300z"/></svg></div>
  <div class="wsearch"><svg width="17" height="17" viewBox="0 0 17 17"><circle cx="10.500" cy="6" r="5.300" fill="none" stroke="#111" stroke-width="1.400"/><path d="M6.800 10L.7 16.300" stroke="#111" stroke-width="1.400"/></svg><span>Pesquisar</span>
    <svg class="beach" width="80" height="38" viewBox="0 0 80 38"><path d="M0 38Q10 20 50 24L80 20V38z" fill="url(#sea)"/><path d="M28 38q20-2 26-8 8-7 26-6v14z" fill="#f0c674"/><path d="M28 38q-2-5 14-7l-2 7z" fill="#d3edf8"/><path d="M62 22q8-6 18 0v8q-8 2-18-2z" fill="#709a2c"/><path d="M50 35q3-16-3-29" stroke="#a9682b" stroke-width="3" fill="none"/><path d="M48 7Q36 0 31 9q8-3 16-1-12-2-12 8 5-6 13-7-2 4 1 9 2-5 1-9 8 1 10 7 1-7-9-8 7-2 11 0-3-8-14-1z" fill="#5f8a25"/><path d="M67 24q1-10-1-16M74 23q2-8 0-14" stroke="#a9682b" stroke-width="1.500"/><path d="M58 6l8 2-6 5 7-3 2 5 1-6 5 1-4 5 6-3 2 4V3l-6 3-5-4-2 4z" fill="#6c9630"/></svg></div>
  <div class="cell"><svg width="17" height="16" viewBox="0 0 17 16" fill="none" stroke="#000" stroke-width="1.300"><path d="M.7 4.700h10.600v6.600H.7zM.7 0v2.500h10.600V0M.7 16v-2.500h10.600V16M15 0v3M15 8v8"/><path d="M13.500 4h3v3h-3z" fill="#000"/></svg></div>
  <div class="apps">
    <div class="cell"><svg width="24" height="24" viewBox="0 0 24 24"><circle cx="12" cy="12" r="12" fill="url(#edgeG)"/><path d="M0 12Q0 6 7 6q8 0 8 5-1-2-3-2-5 0-3 6 3 5 8 5 3 0 5-2-4 6-11 6Q0 23 0 12z" fill="#0f5fb5"/><path d="M15 11q0 2-2 3 2 3 6 2 5-1 5-5v2q-1 6-7 5-6-1-6-6 1-3 4-1z" fill="#fff" fill-opacity=".85"/></svg></div>
    <div class="cell ul"><svg width="22" height="20" viewBox="0 0 22 20"><path d="M0 2Q0 1 1 1h7l2 2h11v3H0z" fill="#d79b1c"/><path d="M0 4h20q2 0 2 2v12H0z" fill="#fccf60"/><path d="M4 18v-6q0-1 1-1h12q1 0 1 1v6h-4v-3H8v3z" fill="#3f8fd2"/></svg></div>
    <div class="cell"><svg width="24" height="24" viewBox="0 0 24 24"><path d="M6.500 7V2.500q0-1 1-1h9q1 0 1 1V7" fill="none" stroke="#27b4ee" stroke-width="2"/><path d="M1 6h22v14q0 3-3 3H4q-3 0-3-3z" fill="url(#store)"/><path d="M7.500 9.500h4v4h-4z" fill="#f25022"/><path d="M12.500 9.500h4v4h-4z" fill="#7fba00"/><path d="M7.500 14.500h4v4h-4z" fill="#00a4ef"/><path d="M12.500 14.500h4v4h-4z" fill="#ffb900"/></svg></div>
    <div class="cell"><svg width="25" height="24" viewBox="0 0 25 24"><path d="M0 8L12.500 0 25 8v3H0z" fill="#0a4b96"/><path d="M2 8h21v9H2z" fill="#fff"/><path d="M0 8l12.500 8L25 8v15H0z" fill="#1490df"/></svg><b class="n99">99+</b></div>
    <div class="cell"><svg width="22" height="22" viewBox="0 0 22 22"><circle cx="11" cy="11" r="10" fill="#181010" stroke="#d91f26" stroke-width="1.500"/><path d="M5 9l4-4 2 2 4-2-1 3 3 2-3 2 1 3-5 2-4-1 0-3z" fill="#e3222a"/><circle cx="11" cy="11.500" r="2" fill="none" stroke="#181010" stroke-width="1.300"/></svg></div>
    <div class="cell on"><svg width="24" height="24" viewBox="0 0 24 24"><circle cx="12" cy="12" r="12" fill="#fbc116"/><path d="M12 12L1.600 6A12 12 0 0 0 12 24l5-9z" fill="#34a853"/><path d="M1.600 6A12 12 0 0 1 22.400 6H12l-5 9z" fill="#e33b2e"/><circle cx="12" cy="12" r="5.700" fill="#fff"/><circle cx="12" cy="12" r="4.500" fill="#3f7fee"/></svg></div>
    <div class="cell"><svg width="24" height="17" viewBox="0 0 24 17"><rect width="24" height="17" rx="4" fill="#f00"/><path d="M9.500 4.800l6 3.700-6 3.700z" fill="#fff"/></svg></div>
    <div class="cell ul"><svg width="24" height="24" viewBox="0 0 24 24"><path d="M17.500 0L24 3v18l-6.500 3L7 13.500 2.500 17 0 15.500l4-3.500-4-3.500L2.500 7 7 10.500z" fill="#1583cb"/><path d="M17.500 0L24 3v18l-6.500 3z" fill="#2ba3ec"/><path d="M17.500 7v10L11 12z" fill="#ebdfd3"/></svg></div>
    <div class="cell"><svg width="24" height="24" viewBox="0 0 24 24"><rect width="24" height="24" rx="2.500" fill="#2d5473"/><path d="M3 3q6 0 8 4 6 3 7 9l3 3-3-1M4 3q0 5 3 8l2 7 2-4 3 4" fill="none" stroke="#dfe8ef" stroke-width="1.200"/><path d="M17 2l4 4M21 2l-2 4" stroke="#dfe8ef"/></svg></div>
  </div>
  <div class="tray">
    <svg class="w" width="24" height="20" viewBox="0 0 24 20"><circle cx="17" cy="6" r="6" fill="#f28a1a"/><path d="M5 20a5 5 0 0 1 0-9q1-5 6-5 5 0 6 5 7 0 7 4.500Q24 20 19 20z" fill="url(#cloud)"/></svg>
    <span class="deg">30°C</span><span class="pred">Pred. nublado</span>
    <svg class="ti" viewBox="0 0 16 16" fill="none" stroke="#000" stroke-width="1.300"><path d="M2.500 11L8 5.500l5.500 5.500"/></svg>
    <svg class="ti" viewBox="0 0 16 16" fill="none" stroke="#000" stroke-width="1.200"><path d="M3.500 4.500h7v7h-7zM10.500 7.500l3-2v5l-3-2M4 2q4-3 8 0M4 14q4 3 8 0"/></svg>
    <svg class="ti" viewBox="0 0 16 16" fill="none" stroke="#000" stroke-width="1.200"><path d="M6 4.500h8.500v7H4M14.500 7h1v2h-1M.5 3h4v3h-4zM1.500 1v2M3.500 1v2M2.500 6v6"/><path d="M6 6.500h3v3.500H6z" fill="#000"/></svg>
    <svg class="ti" viewBox="0 0 16 16" fill="none" stroke="#000" stroke-width="1.200"><path d="M2 13Q2 4 13 3M5 14q0-7 8.500-8M8 14.500q0-4 6-5M11 14.500q0-2 3-2"/></svg>
    <svg class="ti" viewBox="0 0 16 16" fill="none" stroke="#000" stroke-width="1.200"><path d="M.5 5.500h3l4-3.500v12l-4-3.500h-3zM9.500 6q2 2 0 4M11.500 4q4 4 0 8M13.500 2.500q5 5.500 0 11"/></svg>
    <div class="clock"><span>13:34</span><span>02/03/2024</span></div>
    <div class="notif"><svg width="16" height="16" viewBox="0 0 16 16"><path d="M0 0h16v12H8l-3 3v-3H0z"/><path d="M3 3.500h10M3 6h10M3 8.500h6" stroke="#eee"/></svg><b>22</b></div>
  </div>
</footer>
</body>
</html>
```
FILE: styles.css
```css
* { box-sizing: border-box; }
body { margin: 0; width: 1920px; height: 1080px; overflow: hidden; display: flex; flex-direction: column; font-family: Roboto, sans-serif; color: #333; background: #fff; }
svg { display: block; flex: none; }
.defs { position: absolute; }

/* browser tabs */
.tabstrip { height: 40px; background: #d3e3fd; display: flex; align-items: center; padding-left: 6px; font: 12px "Noto Sans", sans-serif; position: relative; flex: none; }
.tabsearch { width: 28px; height: 28px; border-radius: 9px; background: #e9f1ff; display: flex; align-items: center; justify-content: center; }
.btab { width: 230px; height: 34px; margin-top: 6px; padding: 0 8px 6px 15px; display: flex; align-items: center; }
.btab.on { width: 232px; margin-left: 14px; padding-left: 8px; background: #fff; border-radius: 10px 10px 0 0; }
.bt { margin-left: 9px; flex: none; white-space: nowrap; overflow: hidden; color: #444; }
.u1 { width: 173px; letter-spacing: -.3px; }
.btab .u2 { width: 171px; margin-left: 9px; color: #222; letter-spacing: -.36px; -webkit-mask-image: linear-gradient(90deg, #000 86%, transparent 97%); mask-image: linear-gradient(90deg, #000 86%, transparent 97%); }
.x { margin-left: 8px; }
.u2 + .x { margin-left: 9px; }
.newtab { margin-left: 15px; }
.loadbar { position: absolute; left: 840px; top: 0; width: 238px; height: 1px; background: #c4d9fb; }
.loadbar i { display: block; width: 48px; height: 1px; background: #1a7fe8; }
.wc { margin-left: auto; display: flex; }
.wc svg { width: 46px; height: 10px; }

/* address bar */
.addr { height: 47px; border-bottom: 1px solid #dcdfdc; display: flex; align-items: center; padding: 0 4px; flex: none; background: #fff; }
.nb { width: 36px; height: 16px; }
.nb.av { height: 20px; }
.r1 { margin-left: 8px; }
.omni { width: 1680px; height: 34px; border-radius: 17px; background: #ebeef8; margin-left: 8px; display: flex; align-items: center; padding: 0 8px 0 5px; }
.site { width: 24px; height: 24px; border-radius: 50%; background: #fff; display: flex; align-items: center; justify-content: center; }
.url { margin-left: 8px; margin-right: auto; font: 14px "Noto Sans", sans-serif; letter-spacing: -.45px; color: #474747; white-space: nowrap; position: relative; top: -1px; }
.url em { font-style: normal; color: #1a1a1a; }
.oi { width: 32px; height: 18px; }

/* document header */
.app { height: 40px; background: #f7f9fc; display: flex; align-items: center; padding-left: 4px; flex: none; }
.brand { width: 70px; margin-left: 7px; margin-top: -3px; font: 300 18.5px Roboto, sans-serif; color: #555; }
.burger { width: 16px; height: 15px; margin: 0 12px; display: flex; flex-direction: column; justify-content: space-between; }
.burger i { height: 3px; background: #333; }
h1 { margin: 2px 0 0; width: 219px; font: 700 22px Roboto, sans-serif; letter-spacing: .38px; white-space: nowrap; }
.main { width: 44px; font-size: 16px; color: #888; padding-top: 5px; letter-spacing: -.3px; }
.cap { margin-left: 33px; margin-top: -2px; }
.hr { margin-left: auto; display: flex; align-items: center; width: 427px; }
.hi { width: 32px; height: 19px; }
.bell { position: relative; }
.bell b { position: absolute; left: 16px; top: -8px; width: 16px; height: 17px; border-radius: 3px; background: #1651b0; color: #fff; font: 700 12px/17px Roboto; text-align: center; }
button { margin: 0 11px 0 4px; width: 60px; height: 33px; border: 0; border-radius: 4px; background: #1651b0; color: #fff; font: 500 15px Roboto; padding: 0; }
.caret { width: 0; border: 5px solid transparent; border-top-color: #333; border-bottom: 0; margin-left: 5px; }
.c1 { margin: 0 13px 0 7px; border-width: 4px 4px 0; }
.name { margin-left: 5px; width: 96px; font-size: 14.5px; letter-spacing: -.35px; white-space: nowrap; }

/* left rail and feature toolbar */
main { height: 913px; display: flex; flex: none; }
.rail { width: 40px; background: #fafafa; border-top: 1px solid #ccc; display: flex; flex-direction: column; align-items: center; padding: 7px 8px 0; }
.rail svg { width: 19px; height: 19px; margin-bottom: 16px; }
.rail .last { margin-top: auto; margin-bottom: 5px; width: 20px; }
.studio { flex: 1; display: flex; flex-direction: column; }
.tools { height: 36px; display: flex; align-items: center; }
.un { width: 35px; height: 14px; }
.sep { width: 4px; height: 26px; display: flex; justify-content: center; flex: none; }
.sep::before { content: ""; width: 2px; background: #ddd; }
.sk { width: 85px; display: flex; align-items: center; gap: 5px; padding-left: 8px; font-size: 15px; letter-spacing: -.45px; }
.t, .row svg, .sk svg { fill: none; stroke: #3a3a3a; stroke-width: 1; stroke-linejoin: round; }
.t { width: 34px; height: 18px; flex: none; }
.c { width: 18px; height: 10px; padding-right: 2px; flex: none; }
.vx { font: 700 16px/16px "Liberation Serif", serif; text-align: center; }
.th { width: 20px; height: 20px; margin: 0 7px; border: 1px solid #777; border-radius: 3px; font-size: 11px; line-height: 16px; text-align: center; }
.stools { width: 160px; height: 32px; margin-left: 11px; padding-left: 10px; background: #ededed; border-radius: 3px; display: flex; align-items: center; font-size: 15px; white-space: nowrap; letter-spacing: -.5px; }
.stools span { width: 90px; }
kbd { height: 19px; border: 1px solid #aaa; border-bottom-width: 2px; border-radius: 2px; font: 11px/16px Roboto, "DejaVu Sans", sans-serif; padding: 0 2px; width: 33px; margin-top: 2px; text-align: center; letter-spacing: -.2px; }
kbd + kbd { width: 17px; }
.un + .un + .sep { margin-left: -1px; }

/* feature and part lists */
.work { height: 847px; display: flex; }
.features { width: 206px; border: 1px solid #ccc; border-left-color: #ddd; display: flex; flex-direction: column; font-size: 14px; letter-spacing: -.15px; color: #3c3c3c; }
.fh { height: 33px; display: flex; align-items: center; padding-left: 6px; flex: none; }
.fh span { margin-left: 12px; width: 104px; margin-top: -1px; }
.fo { margin-right: 12px; margin-top: 2px; }
.ff { height: 28px; display: flex; align-items: center; padding-left: 9px; flex: none; }
.inp { margin-left: 13px; width: 158px; height: 29px; border: 1px solid #ccc; border-top: 2px solid #aaa; border-radius: 3px; padding-left: 4px; font: italic 14px/25px Roboto; color: #777; letter-spacing: -.15px; }
.list { display: flex; overflow: hidden; flex: none; }
.l1 { height: 488px; }
.l2 { height: 296px; border-top: 1px solid #ccc; }
.rows { flex: 1; overflow: hidden; }
.row { height: 26px; display: flex; align-items: center; padding-left: 5px; gap: 4px; white-space: nowrap; }
.row svg { width: 16px; height: 16px; opacity: .85; }
.row.g svg { width: 14px; height: 14px; }
.row.g { padding-left: 2px; gap: 6px; }
.row.k { padding-left: 24px; }
.geo { position: relative; }
.geo::before { content: ""; position: absolute; left: 4px; top: 0; width: 9px; height: 103px; border-bottom: 1px solid #bbb; background: linear-gradient(#bbb, #bbb) 4px 0 / 1px 100% no-repeat; }
.row.off { color: #a5a5a5; }
.row.off svg { opacity: .4; }
.sb { width: 17px; margin-right: 5px; background: #f0f0f0; display: flex; flex-direction: column; align-items: center; padding: 7px 0 6px; }
.up { border: 4px solid transparent; border-top-width: 0; border-bottom-color: #999; }
.dn { border: 4px solid transparent; border-bottom-width: 0; border-top-color: #444; margin-top: auto; }
.thumb { width: 13px; height: 25px; margin-top: 7px; background: #c1c1c1; }
.l2 .thumb { height: 17px; margin-top: 6px; }
.l2 .sb { padding-bottom: 7px; }

/* modelling canvas */
.canvas { position: relative; width: 1674px; overflow: hidden; }
.pl { font: italic 15px Roboto; fill: #4a78c8; }
.vc { font: 35px Roboto; }
.toggle { position: absolute; left: 0; top: 398px; width: 32px; height: 34px; background: #fff; border: 1px solid #ccc; border-left: 0; display: flex; align-items: center; justify-content: center; }
.side { position: absolute; right: 0; top: 349px; width: 32px; border: 1px solid #bbb; border-right: 0; background: #fff; }
.side div { height: 32.500px; display: flex; align-items: center; justify-content: center; position: relative; }
.side div + div { border-top: 1px solid #ccc; }
.side svg { width: 20px; height: 20px; }
.side b { position: absolute; left: 7px; bottom: 6px; font: 700 17px/15px "Liberation Serif", serif; background: #fff; }
.poor { position: absolute; left: 10px; top: 823px; display: flex; align-items: center; gap: 5px; font-size: 15px; letter-spacing: -.65px; word-spacing: 1px; color: #666; }

/* document tabs */
.dtabs { height: 30px; background: #d0d0d0; display: flex; padding-left: 8px; }
.dtabs > svg { margin: 6px 15px 0 0; }
.dt { width: 200px; height: 27px; padding-left: 11px; display: flex; align-items: center; gap: 4px; font-size: 15px; letter-spacing: -.5px; border-radius: 0 0 6px 6px; background: #e8e8e8; color: #666; margin-right: 2px; }
.dt.on { height: 28px; background: #fff; border-bottom: 2px solid #1651b0; color: #333; }

/* system taskbar */
.taskbar { height: 40px; background: linear-gradient(90deg, #e8dcd1, #ede0d4 60%, #efe3d6); display: flex; font-family: "Noto Sans", sans-serif; color: #111; flex: none; }
.cell { width: 48px; height: 40px; display: flex; align-items: center; justify-content: center; position: relative; }
.wsearch { width: 288px; background: #fff; border: 1px solid #c9c3bd; display: flex; align-items: center; padding-left: 11px; font-size: 14px; letter-spacing: -.4px; }
.wsearch span { margin-left: 12px; margin-right: auto; }
.apps { display: flex; gap: 1px; margin-left: 3px; }
.ul::after, .cell.on::after { content: ""; position: absolute; left: 4px; right: 4px; bottom: 0; height: 2px; background: #0078d7; }
.cell.on { background: #f6f2ed; }
.cell.on::after { left: 0; right: 0; }
.n99 { position: absolute; left: 19px; top: 19px; width: 29px; height: 17px; border: 1px solid #777; border-radius: 9px; background: rgba(220,220,220,.9); font: 600 11px/15px "Noto Sans"; text-align: center; }
.tray { margin-left: auto; width: 418px; display: flex; align-items: center; font-size: 13px; }
.deg { margin-left: 8px; width: 38px; letter-spacing: -.3px; }
.pred { width: 109px; white-space: nowrap; }
.ti { width: 16px; height: 16px; margin-right: 8px; }
.clock { width: 70px; margin-left: -4px; display: flex; flex-direction: column; text-align: center; font-size: 11.500px; line-height: 18px; letter-spacing: -.3px; }
.notif { position: relative; margin-left: 12px; }
.notif b { position: absolute; left: 5px; top: 6px; width: 21px; height: 17px; border: 1px solid #777; border-radius: 9px; background: #ddd; font: 600 11px/15px "Noto Sans"; text-align: center; }
```
